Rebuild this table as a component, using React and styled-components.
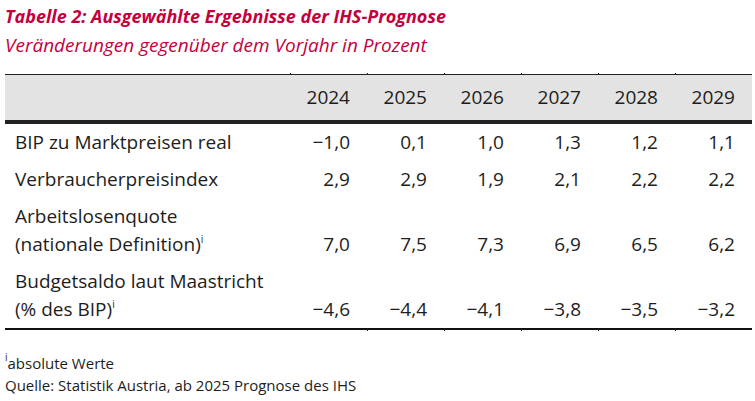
import styled, { createGlobalStyle } from 'styled-components'

const Global = createGlobalStyle`
  body {
    margin: 0;
    background: #fff;
    font-family: "Open Sans", "Liberation Sans", sans-serif;
    color: #1d1d1b;
  }
`

const Page = styled.div`
  padding: 4px 3px 0 5px;
`

const Title = styled.h1`
  margin: 0;
  font-size: 18px;
  line-height: 24px;
  font-weight: 700;
  font-style: italic;
  color: #c4003d;
`

const Subtitle = styled.h2`
  margin: 5px 0 0;
  font-size: 19px;
  line-height: 24px;
  font-weight: 400;
  font-style: italic;
  color: #c4003d;
`

const Table = styled.table`
  margin-top: 17px;
  width: 747px;
  border-collapse: collapse;
  table-layout: fixed;
  font-size: 19px;
`

const HeadRow = styled.tr`
  background: #e3e3e3;
  border-top: 1px solid #222;
  border-bottom: 4px solid #222;
`

const Th = styled.th`
  position: relative;
  box-sizing: border-box;
  height: 47px;
  padding: 0 17px 0 0;
  text-align: right;
  font-weight: 400;
  width: ${p => (p.$label ? '285px' : '77px')};
  &::before {
    content: '';
    display: ${p => (p.$label ? 'none' : 'block')};
    position: absolute;
    left: 0;
    top: -2px;
    width: 1px;
    height: 1px;
    background: #222;
  }
`

const BodyRow = styled.tr`
  border-bottom: ${p => (p.$last ? '2px solid #111' : 'none')};
`

const Label = styled.td`
  padding: 4px 0 5px 10px;
  line-height: 28px;
  vertical-align: bottom;
`

const Num = styled.td`
  position: relative;
  padding: 4px 17px 5px 0;
  line-height: 28px;
  text-align: right;
  vertical-align: bottom;
  &::after {
    content: '';
    display: ${p => (p.$tick ? 'block' : 'none')};
    position: absolute;
    left: 0;
    bottom: -3px;
    width: 1px;
    height: 2px;
    background: #222;
  }
`

const Sup = styled.sup`
  font-size: 10px;
  line-height: 0;
  vertical-align: 8px;
`

const Notes = styled.div`
  margin-top: 22px;
  font-size: 15px;
  line-height: 22px;
`

const years = ['2024', '2025', '2026', '2027', '2028', '2029']

const rows = [
  { label: ['BIP zu Marktpreisen real'], values: ['−1,0', '0,1', '1,0', '1,3', '1,2', '1,1'] },
  { label: ['Verbraucherpreisindex'], values: ['2,9', '2,9', '1,9', '2,1', '2,2', '2,2'] },
  { label: ['Arbeitslosenquote', '(nationale Definition)'], note: true, values: ['7,0', '7,5', '7,3', '6,9', '6,5', '6,2'] },
  { label: ['Budgetsaldo laut Maastricht', '(% des BIP)'], note: true, values: ['−4,6', '−4,4', '−4,1', '−3,8', '−3,5', '−3,2'] },
]

export default function App() {
  return (
    <Page>
      <Global />
      <Title>Tabelle 2: Ausgewählte Ergebnisse der IHS-Prognose</Title>
      <Subtitle>Veränderungen gegenüber dem Vorjahr in Prozent</Subtitle>
      <Table>
        <thead>
          <HeadRow>
            <Th $label />
            {years.map(y => <Th key={y}>{y}</Th>)}
          </HeadRow>
        </thead>
        <tbody>
          {rows.map((r, i) => {
            const last = i === rows.length - 1
            return (
              <BodyRow key={i} $last={last}>
                <Label>
                  {r.label.map((l, j) => (
                    <div key={j}>
                      {l}
                      {r.note && j === r.label.length - 1 && <Sup>i</Sup>}
                    </div>
                  ))}
                </Label>
                {r.values.map((v, j) => <Num key={j} $tick={last && j > 0}>{v}</Num>)}
              </BodyRow>
            )
          })}
        </tbody>
      </Table>
      <Notes>
        <div><Sup>i</Sup>absolute Werte</div>
        <div>Quelle: Statistik Austria, ab 2025 Prognose des IHS</div>
      </Notes>
    </Page>
  )
}
